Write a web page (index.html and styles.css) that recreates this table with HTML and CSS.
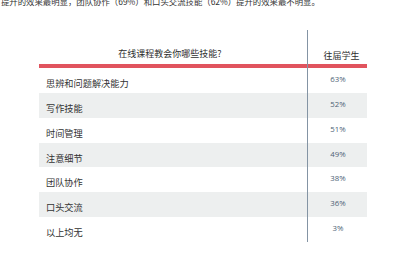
FILE: index.html
```html
<!DOCTYPE html>
<html lang="zh-CN">
<head>
<meta charset="utf-8">
<title>在线课程教会你哪些技能?</title>
<link rel="stylesheet" href="styles.css">
</head>
<body>
<p class="intro">提升的效果最明显，团队协作（69%）和口头交流技能（62%）提升的效果最不明显。</p>
<div class="table">
  <div class="head">
    <div class="h-skill">在线课程教会你哪些技能?</div>
    <div class="h-value">往届学生</div>
  </div>
  <div class="bar"></div>
  <div class="row"><div class="skill">思辨和问题解决能力</div><div class="value">63%</div></div>
  <div class="row alt"><div class="skill">写作技能</div><div class="value">52%</div></div>
  <div class="row"><div class="skill">时间管理</div><div class="value">51%</div></div>
  <div class="row alt short"><div class="skill">注意细节</div><div class="value">49%</div></div>
  <div class="row"><div class="skill">团队协作</div><div class="value">38%</div></div>
  <div class="row alt"><div class="skill">口头交流</div><div class="value">36%</div></div>
  <div class="row"><div class="skill">以上均无</div><div class="value">3%</div></div>
</div>
</body>
</html>
```

FILE: styles.css
```css
html, body {
  margin: 0;
  padding: 0;
  background: #ffffff;
}

body {
  font-family: "Noto Sans CJK SC", "Noto Sans", sans-serif;
  color: #333333;
  width: 400px;
  height: 258px;
  overflow: hidden;
}

.intro {
  margin: -5px 0 23px 1px;
  font-size: 8.4px;
  line-height: 12px;
  color: #333333;
  white-space: nowrap;
}

.table {
  position: relative;
  margin-left: 39px;
  width: 328px;
}

.table::after {
  content: "";
  position: absolute;
  left: 268px;
  top: 0;
  bottom: 0;
  width: 1px;
  background: #8494a4;
}

.head {
  display: grid;
  grid-template-columns: 268px 60px;
  height: 34px;
  align-items: end;
  font-size: 9px;
  line-height: 1;
  color: #2e2e2e;
}

.h-skill {
  text-align: center;
  padding-right: 6px;
  padding-bottom: 6px;
}

.h-value {
  text-align: center;
  padding-left: 9px;
  padding-bottom: 4px;
}

.bar {
  height: 4px;
  background: #e1545e;
}

.row {
  display: grid;
  grid-template-columns: 268px 60px;
  height: 25px;
  align-items: start;
}

.row.short {
  height: 24px;
}

.row.alt {
  background: #edefef;
}

.skill {
  padding: 11px 0 0 7px;
  font-size: 9.2px;
  line-height: 1;
  color: #333333;
}

.value {
  padding-top: 8px;
  text-align: center;
  font-family: "Open Sans", "Noto Sans", sans-serif;
  font-size: 7.8px;
  line-height: 1;
  color: #4d6275;
  padding-left: 2px;
}
```
